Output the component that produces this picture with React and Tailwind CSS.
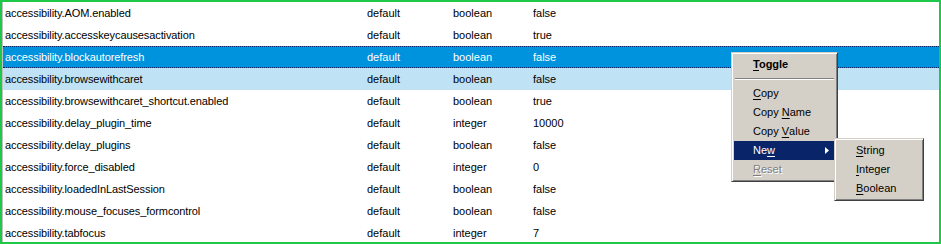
import React from 'react';

// rows of the about:config style table
const prefs = [
  { name: 'accessibility.AOM.enabled', type: 'boolean', value: 'false' },
  { name: 'accessibility.accesskeycausesactivation', type: 'boolean', value: 'true' },
  { name: 'accessibility.blockautorefresh', type: 'boolean', value: 'false', selected: true },
  { name: 'accessibility.browsewithcaret', type: 'boolean', value: 'false', hover: true },
  { name: 'accessibility.browsewithcaret_shortcut.enabled', type: 'boolean', value: 'true' },
  { name: 'accessibility.delay_plugin_time', type: 'integer', value: '10000' },
  { name: 'accessibility.delay_plugins', type: 'boolean', value: 'false' },
  { name: 'accessibility.force_disabled', type: 'integer', value: '0' },
  { name: 'accessibility.loadedInLastSession', type: 'boolean', value: 'false' },
  { name: 'accessibility.mouse_focuses_formcontrol', type: 'boolean', value: 'false' },
  { name: 'accessibility.tabfocus', type: 'integer', value: '7' },
];

const font = { fontFamily: '"Liberation Sans", Arial, sans-serif' };

function Row({ pref }) {
  let cls = 'bg-white text-black';
  if (pref.selected) cls = 'bg-[#0093dd] text-white border-y border-dotted border-[#0a246a]';
  if (pref.hover) cls = 'bg-[#c0e2f5] text-black';
  return (
    <div className={`flex items-center h-[22px] box-border text-[11px] ${cls}`}>
      <div className="w-[364px] pl-[2px] whitespace-nowrap tracking-[-0.1px]">{pref.name}</div>
      <div className="w-[86px]">default</div>
      <div className="w-[80px]">{pref.type}</div>
      <div className="flex-1">{pref.value}</div>
    </div>
  );
}

// letter with access-key underline
function U({ children }) {
  return <span className="underline underline-offset-2">{children}</span>;
}

function MenuItem({ children, active, disabled, arrow }) {
  let cls = 'text-black';
  if (active) cls = 'bg-[#0a246a] text-white';
  if (disabled) cls = 'text-[#808080] [text-shadow:1px_1px_0_#ffffff]';
  return (
    <div className={`relative flex items-center h-[19px] pl-[19px] ${cls}`}>
      {children}
      {arrow && (
        <svg className="absolute right-[6px] top-[6px]" width="4" height="7" viewBox="0 0 4 7">
          <path d="M0 0 L4 3.5 L0 7 Z" fill="#ffffff" />
        </svg>
      )}
    </div>
  );
}

const menuBox =
  'absolute bg-[#d4d0c8] border border-t-[#d4d0c8] border-l-[#d4d0c8] border-r-[#404040] border-b-[#404040] shadow-[inset_1px_1px_0_#ffffff,inset_-1px_-1px_0_#808080] p-[2px] text-[11px]';

export default function App() {
  return (
    <div style={font} className="relative w-[941px] h-[244px] border-2 border-[#1ec94a] bg-white overflow-hidden box-border">
      <div className="border-l border-[#c0c0c0]">
        {prefs.map((p) => (
          <Row key={p.name} pref={p} />
        ))}
      </div>

      {/* context menu */}
      <div className={`${menuBox} left-[729px] top-[50px] w-[107px]`}>
        <MenuItem>
          <span className="font-bold">
            <U>T</U>oggle
          </span>
        </MenuItem>
        <div className="h-[10px] flex items-center px-[1px]">
          <div className="w-full border-t border-t-[#808080] border-b border-b-white" />
        </div>
        <MenuItem>
          <U>C</U>opy
        </MenuItem>
        <MenuItem>
          Copy&nbsp;<U>N</U>ame
        </MenuItem>
        <MenuItem>
          Copy&nbsp;<U>V</U>alue
        </MenuItem>
        <MenuItem active arrow>
          Ne<U>w</U>
        </MenuItem>
        <MenuItem disabled>
          <U>R</U>eset
        </MenuItem>
      </div>

      {/* submenu */}
      <div className={`${menuBox} left-[832px] top-[136px] w-[90px]`}>
        <MenuItem>
          <U>S</U>tring
        </MenuItem>
        <MenuItem>
          <U>I</U>nteger
        </MenuItem>
        <MenuItem>
          <U>B</U>oolean
        </MenuItem>
      </div>
    </div>
  );
}
